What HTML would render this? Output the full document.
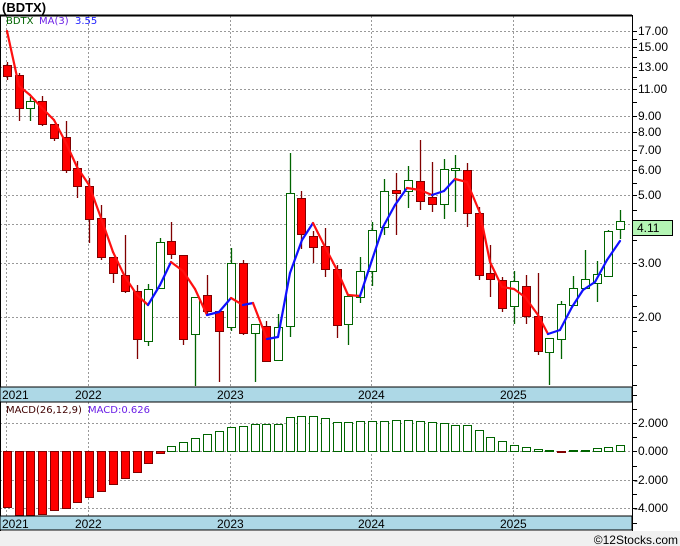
<!DOCTYPE html>
<html><head><meta charset="utf-8"><style>
html,body{margin:0;padding:0;background:#fff;}
body{width:680px;height:546px;overflow:hidden;position:relative;font-family:"Liberation Sans",sans-serif;}
svg{position:absolute;left:0;top:0;}
text{font-family:"Liberation Sans",sans-serif;}
.lg{font-family:"DejaVu Sans",sans-serif;}
</style></head><body>
<svg id="s" width="680" height="546" viewBox="0 0 680 546" xmlns="http://www.w3.org/2000/svg">
<rect x="0" y="531" width="680" height="15" fill="#f0f0f0"/>
<text x="2" y="12" font-size="13" font-weight="bold" fill="#000">(BDTX)</text>
<g id="grid" stroke="#999" stroke-width="1" stroke-dasharray="2,2" fill="none"></g>
<g id="price"></g>
<g id="macd"></g>
<line x1="0" y1="15.5" x2="632" y2="15.5" stroke="#000" stroke-width="2"/>
<line x1="0.5" y1="15" x2="0.5" y2="531" stroke="#000" stroke-width="1"/>
<rect x="0" y="387" width="632" height="15" fill="#add8e6" stroke="#000" stroke-width="1"/>
<rect x="0" y="516" width="632" height="14" fill="#add8e6" stroke="#000" stroke-width="1"/>
<line x1="632.5" y1="15" x2="632.5" y2="531" stroke="#000" stroke-width="1"/>
<g font-size="12" fill="#000">
<text x="2" y="399">2021</text><text x="75" y="399">2022</text><text x="217" y="399">2023</text><text x="358" y="399">2024</text><text x="500" y="399">2025</text>
<text x="2" y="528">2021</text><text x="75" y="528">2022</text><text x="217" y="528">2023</text><text x="358" y="528">2024</text><text x="500" y="528">2025</text>
</g>
<g id="ticks" stroke="#000" stroke-width="1"></g>
<g font-size="12" fill="#000">
<text x="638" y="35">17.00</text><text x="638" y="51">15.00</text><text x="638" y="71">13.00</text><text x="638" y="93">11.00</text>
<text x="638" y="120">9.00</text><text x="638" y="136">8.00</text><text x="638" y="154">7.00</text><text x="638" y="174">6.00</text>
<text x="638" y="199">5.00</text><text x="638" y="267">3.00</text><text x="638" y="321">2.00</text>
<text x="638" y="427">2.000</text><text x="638" y="455">0.000</text><text x="634" y="484">-2.000</text><text x="634" y="512">-4.000</text>
</g>
<rect x="632.5" y="220.5" width="40" height="15" fill="#b4f5b4" stroke="#000"/>
<text x="637" y="232" font-size="12" fill="#000">4.11</text>
<text class="lg" x="6" y="24" font-size="10" fill="#006400">BDTX</text>
<text class="lg" x="39" y="24" font-size="10" fill="#6a1ee6">MA(3)</text>
<text class="lg" x="75" y="24" font-size="10" fill="#2020ff">3.55</text>
<text class="lg" x="6" y="413" font-size="10" fill="#400000">MACD(26,12,9)</text>
<text class="lg" x="88" y="413" font-size="10" fill="#6a1ee6">MACD:0.626</text>
<text x="678" y="544" font-size="12" fill="#000" text-anchor="end">©12Stocks.com</text>
</svg>
<script>
var NS="http://www.w3.org/2000/svg";
function el(p,t,a){var e=document.createElementNS(NS,t);for(var k in a)e.setAttribute(k,a[k]);p.appendChild(e);return e;}
var g=document.getElementById('grid');
[31,47,67,89,116,132,150,170,195,224,263,317].forEach(function(y){el(g,'line',{x1:0,y1:y+.5,x2:632,y2:y+.5});});
[423,451,480,508].forEach(function(y){el(g,'line',{x1:0,y1:y+.5,x2:632,y2:y+.5});});
[6,88,230,371,513].forEach(function(x){el(g,'line',{x1:x+.5,y1:16,x2:x+.5,y2:387});el(g,'line',{x1:x+.5,y1:402,x2:x+.5,y2:516});});
var t=document.getElementById('ticks');
[31,39,47,57,67,77,89,102,116,132,150,160,170,183,195,210,224,240,263,295,306,317,331,347,365,385,395].forEach(function(y){el(t,'line',{x1:632,y1:y+.5,x2:637,y2:y+.5});});
[409,423,437,451,466,480,494,508,523].forEach(function(y){el(t,'line',{x1:632,y1:y+.5,x2:637,y2:y+.5});});
var C=[[7,65,76,62,80,0],[19,75,108,73,121,0],[30,101,108,97,121,1],[42,101,124,96,126,0],[54,124,138,124,141,0],[66,137,170,121,173,0],[77,168,186,161,198,0],[89,186,219,178,243,0],[101,218,257,205,260,0],[113,257,273,257,283,0],[125,275,291,235,293,0],[137,291,339,285,359,0],[148,289,341,284,346,1],[160,242,288,238,288,1],[171,241,254,222,259,0],[183,255,339,255,345,0],[195,297,334,297,386,1],[207,295,311,275,316,0],[219,311,331,311,382,0],[231,263,327,248,331,1],[243,263,333,260,335,0],[255,324,333,324,382,1],[266,326,361,321,361,0],[278,327,360,314,361,1],[290,193,326,153,337,1],[301,198,234,191,249,0],[313,236,247,231,263,0],[325,246,269,228,277,0],[337,269,325,265,338,0],[348,296,324,296,345,1],[360,271,297,257,303,1],[372,230,271,222,286,1],[384,191,227,179,235,1],[396,190,193,173,235,0],[408,180,191,166,208,1],[420,181,201,140,210,0],[432,197,204,162,212,0],[444,169,204,159,219,1],[455,168,170,155,212,1],[467,170,213,163,227,0],[479,213,275,207,280,0],[490,273,279,245,297,0],[502,280,308,277,312,0],[514,281,306,271,324,1],[526,286,316,275,324,0],[538,316,351,273,355,0],[549,338,352,338,385,1],[561,304,339,301,359,1],[573,288,305,276,305,1],[585,279,288,250,288,1],[597,274,283,261,302,1],[608,231,276,230,276,1],[620,221,229,210,239,1]];
var P=document.getElementById('price');
C.forEach(function(c){var col=c[5]?'#006400':'#800000';
el(P,'line',{x1:c[0]+.5,y1:c[3],x2:c[0]+.5,y2:c[4],stroke:col,'stroke-width':1.3});
el(P,'rect',{x:c[0]-3.5,y:c[1]+.5,width:8,height:Math.max(1,c[2]-c[1]),fill:c[5]?'#fff':'#ff0000',stroke:col,'stroke-width':1});});
var M=[[7,31],[19,86],[30,95],[42,108],[54,120],[66,143],[77,167],[89,185],[101,218],[113,252],[125,277],[137,295],[148,305],[160,285],[171,262],[183,271],[195,289],[207,315],[219,312],[231,298],[243,305],[253,303],[267,339],[278,337],[290,273],[302,240],[313,223],[325,247],[337,270],[348,295],[360,296],[372,260],[383,227],[395,205],[407,188],[420,190],[432,195],[444,191],[455,179],[467,182],[480,213],[490,262],[502,287],[514,289],[525,297],[538,315],[548,334],[560,330],[572,307],[583,290],[595,282],[607,260],[620,241]];
for(var i=1;i<M.length;i++){var a=M[i-1],b=M[i];el(P,'line',{x1:a[0],y1:a[1],x2:b[0],y2:b[1],stroke:b[1]>a[1]?'#ff1010':'#1010ff','stroke-width':2.2,'stroke-linecap':'round'});}
var D=[507,515,515,514,510,508,502,497,491,484,478,472,463,453,446,442,438,434,431,427,426,424,424,424,417,416,416,418,422,422,421,421,421,420,420,421,422,423,425,425,430,437,441,445,447,449,450,452,450,450,448,447,445,443];
var Mg=document.getElementById('macd');
C.forEach(function(c,i){var y=D[i];var neg=y>451;
var top=neg?451:y,h=Math.max(1,Math.abs(y-451));
el(Mg,'rect',{x:c[0]-3.5,y:top+.5,width:8,height:h,fill:neg?'#ff0000':'#fff',stroke:neg?'#800000':'#006400','stroke-width':1});});
</script>
</body></html>
